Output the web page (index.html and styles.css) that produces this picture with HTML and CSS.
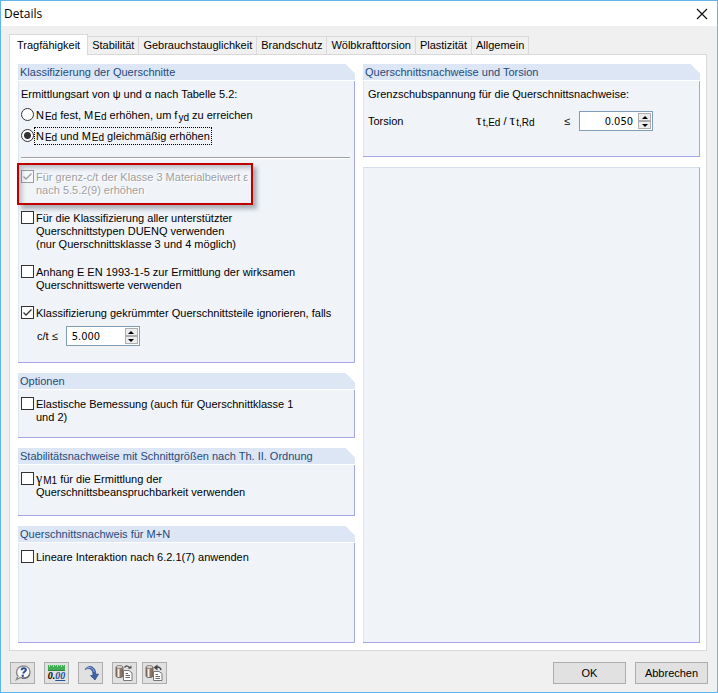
FILE: index.html
```
<!DOCTYPE html>
<html lang="de">
<head>
<meta charset="utf-8">
<title>Details</title>
<link rel="stylesheet" href="styles.css">
</head>
<body>
<div class="dialog">
  <header class="titlebar">
    <h1>Details</h1>
    <button class="close" type="button" aria-label="Schließen">
      <svg width="12" height="12" viewBox="0 0 12 12"><path d="M1 1L11 11M11 1L1 11" fill="none" stroke="#111" stroke-width="1.2"/></svg>
    </button>
  </header>

  <main class="content">
    <nav class="tabs" role="tablist">
      <button class="tab active" type="button" role="tab" aria-selected="true">Tragfähigkeit</button>
      <button class="tab" type="button" role="tab">Stabilität</button>
      <button class="tab" type="button" role="tab">Gebrauchstauglichkeit</button>
      <button class="tab" type="button" role="tab">Brandschutz</button>
      <button class="tab" type="button" role="tab">Wölbkrafttorsion</button>
      <button class="tab" type="button" role="tab">Plastizität</button>
      <button class="tab" type="button" role="tab">Allgemein</button>
    </nav>

    <div class="page">
      <div class="column">
        <section class="group">
          <h2>Klassifizierung der Querschnitte</h2>
          <div class="group-body">
            <div class="method">
              <p>Ermittlungsart von ψ und α nach Tabelle 5.2:</p>
              <div class="option">
                <input type="radio" name="method" id="m1">
                <label for="m1">N<sub>Ed</sub> fest, M<sub>Ed</sub> erhöhen, um f<sub class="low">yd</sub> zu erreichen</label>
              </div>
              <div class="option">
                <input type="radio" name="method" id="m2" checked>
                <label class="focused" for="m2">N<sub>Ed</sub> und M<sub>Ed</sub> gleichmäßig erhöhen</label>
              </div>
            </div>
            <hr>
            <div class="options">
              <div class="option highlighted">
                <input type="checkbox" id="c1" checked disabled>
                <label for="c1">Für grenz-c/t der Klasse 3 Materialbeiwert ε<br>nach 5.5.2(9) erhöhen</label>
              </div>
              <div class="option">
                <input type="checkbox" id="c2">
                <label for="c2">Für die Klassifizierung aller unterstützter<br>Querschnittstypen DUENQ verwenden<br>(nur Querschnittsklasse 3 und 4 möglich)</label>
              </div>
              <div class="option">
                <input type="checkbox" id="c3">
                <label for="c3">Anhang E EN 1993-1-5 zur Ermittlung der wirksamen<br>Querschnittswerte verwenden</label>
              </div>
              <div class="option">
                <input type="checkbox" id="c4" checked>
                <label for="c4">Klassifizierung gekrümmter Querschnittsteile ignorieren, falls</label>
              </div>
            </div>
            <div class="limit">
              <label for="ct">c/t ≤</label>
              <span class="spinner left">
                <input type="text" id="ct" value="5.000">
                <span class="steps">
                  <button type="button" aria-label="Erhöhen"><svg width="6" height="3" viewBox="0 0 6 3"><path d="M0 3L3 0L6 3Z"/></svg></button>
                  <button type="button" aria-label="Verringern"><svg width="6" height="3" viewBox="0 0 6 3"><path d="M0 0L3 3L6 0Z"/></svg></button>
                </span>
              </span>
            </div>
          </div>
        </section>

        <section class="group">
          <h2>Optionen</h2>
          <div class="group-body short">
            <div class="option">
              <input type="checkbox" id="c5">
              <label for="c5">Elastische Bemessung (auch für Querschnittklasse 1<br>und 2)</label>
            </div>
          </div>
        </section>

        <section class="group">
          <h2>Stabilitätsnachweise mit Schnittgrößen nach Th. II. Ordnung</h2>
          <div class="group-body short roomy">
            <div class="option">
              <input type="checkbox" id="c6">
              <label for="c6"><span class="greek">γ</span><sub>M1</sub> für die Ermittlung der<br>Querschnittsbeanspruchbarkeit verwenden</label>
            </div>
          </div>
        </section>

        <section class="group grow">
          <h2>Querschnittsnachweis für M+N</h2>
          <div class="group-body short">
            <div class="option">
              <input type="checkbox" id="c7">
              <label for="c7">Lineare Interaktion nach 6.2.1(7) anwenden</label>
            </div>
          </div>
        </section>
      </div>

      <div class="column">
        <section class="group">
          <h2>Querschnittsnachweise und Torsion</h2>
          <div class="group-body torsion">
            <p>Grenzschubspannung für die Querschnittsnachweise:</p>
            <div class="torsion-row">
              <label for="tau">Torsion</label>
              <span><span class="greek">τ</span><sub>t,Ed</sub> / <span class="greek">τ</span><sub>t,Rd</sub></span>
              <span>≤</span>
              <span class="spinner right">
                <input type="text" id="tau" value="0.050">
                <span class="steps">
                  <button type="button" aria-label="Erhöhen"><svg width="6" height="3" viewBox="0 0 6 3"><path d="M0 3L3 0L6 3Z"/></svg></button>
                  <button type="button" aria-label="Verringern"><svg width="6" height="3" viewBox="0 0 6 3"><path d="M0 0L3 3L6 0Z"/></svg></button>
                </span>
              </span>
            </div>
          </div>
        </section>
        <section class="group empty grow"></section>
      </div>
    </div>
  </main>

  <footer class="footer">
    <div class="tools">
      <button type="button" class="tool" aria-label="Hilfe">
        <svg width="18" height="18" viewBox="0 0 18 18">
          <path d="M9.500 2C13.500 2 16 4.500 16 8C16 11.500 13.500 14 9.500 14C8.500 14 7.500 13.800 6.500 13.400L2.500 15.500L4 12C2.700 11 2.500 9.500 2.500 8C2.500 4.500 5.500 2 9.500 2Z" fill="#fafafa" stroke="#8a8a8a" stroke-width="1.400"/>
          <path d="M15.500 10.500C14.500 13.500 12 14.800 8 14.400" fill="none" stroke="#666" stroke-width="1.200"/>
          <path d="M7.500 6.200C7.600 4.600 8.600 4.200 9.800 4.200C11.400 4.200 12.100 5 11.900 6.200C11.700 7.500 9.500 7.700 9.200 9.500" fill="none" stroke="#2c4a9c" stroke-width="1.900"/>
          <circle cx="8.800" cy="11.700" r="1.200" fill="#2c4a9c"/>
        </svg>
      </button>
      <button type="button" class="tool units" aria-label="Einheiten">
        <svg width="17" height="6" viewBox="0 0 17 6"><rect width="17" height="6" fill="#43ad54"/><path d="M1.500 0V2M3.500 0V1M5.500 0V2M7.500 0V1M9.500 0V2M11.500 0V1M13.500 0V2M15.500 0V1" stroke="#a7dfae"/><path d="M0 5.500H17" stroke="#2f8440"/></svg>
        <span>0.<u>00</u></span>
      </button>
      <button type="button" class="tool" aria-label="Übernehmen">
        <svg width="18" height="18" viewBox="0 0 18 18">
          <path d="M3 5.500C5 2.500 8.500 1.500 11 3.500C13.300 5.300 13.800 8 13.800 10.500L16.500 10L13 16L8.500 11.700L11 11.200C11 8.500 10.500 6.500 8.800 5.300C7 4 5 4.500 3 5.500Z" fill="#3f62a8" stroke="#27447f" stroke-width=".7"/>
          <path d="M4.500 4.500C8 2.300 11.500 4 12.200 8" fill="none" stroke="#9db5dc" stroke-width="1"/>
        </svg>
      </button>
      <button type="button" class="tool" aria-label="Laden">
        <svg width="19" height="18" viewBox="0 0 19 18">
          <path d="M1 3V12C1 14 8 14 8 12V3Z" fill="#8a7565" stroke="#5f534b" stroke-width=".8"/>
          <path d="M3.500 3.500V13" stroke="#f4eee8" stroke-width="2"/>
          <ellipse cx="4.500" cy="3" rx="3.500" ry="1.500" fill="#ddd5cd" stroke="#6d625a" stroke-width=".7"/>
          <path d="M9.500 3.500C11 1.500 13.500 1.500 15 4.500" fill="none" stroke="#555" stroke-width="1.500"/>
          <path d="M12.500 4.500H16.500V1.500Z" fill="#555"/>
          <path d="M8.500 6.500H14L17 9V16.500H8.500Z" fill="#fff" stroke="#777"/>
          <path d="M10.500 9.500H13M10.500 11.500H15M10.500 13.500H15" stroke="#666"/>
        </svg>
      </button>
      <button type="button" class="tool" aria-label="Speichern">
        <svg width="19" height="18" viewBox="0 0 19 18">
          <path d="M1 3V12C1 14 8 14 8 12V3Z" fill="#8a7565" stroke="#5f534b" stroke-width=".8"/>
          <path d="M3.500 3.500V13" stroke="#f4eee8" stroke-width="2"/>
          <ellipse cx="4.500" cy="3" rx="3.500" ry="1.500" fill="#ddd5cd" stroke="#6d625a" stroke-width=".7"/>
          <path d="M11 3.500C13.500 2.500 15.500 3.500 16 6" fill="none" stroke="#444" stroke-width="1.500"/>
          <path d="M12.500 .5V6.500L8.500 3.500Z" fill="#444"/>
          <path d="M8.500 7.500H14L17 9.500V16.500H8.500Z" fill="#fff" stroke="#777"/>
          <path d="M10.500 10.500H13M10.500 12.500H15M10.500 14.500H15" stroke="#666"/>
        </svg>
      </button>
    </div>
    <div class="actions">
      <button type="button" class="action">OK</button>
      <button type="button" class="action">Abbrechen</button>
    </div>
  </footer>
</div>
</body>
</html>
```
FILE: styles.css
```
*, *::after { box-sizing: border-box; }

body {
  margin: 0;
  font: 11px/13px "Liberation Sans", Arial, sans-serif;
  color: #000;
}

h1, h2, p { margin: 0; font-size: 11px; font-weight: normal; }
button, input { font: inherit; color: inherit; padding: 0; }
svg { display: block; }

.dialog {
  display: flex;
  flex-direction: column;
  min-height: 100vh;
  border: 1px solid #62b5eb;
  background: #f0f0f0;
}

.titlebar {
  display: flex;
  justify-content: space-between;
  align-items: center;
  height: 25px;
  padding: 0 9px 0 3px;
  background: #fff;
}
.titlebar h1 { font: 12px/16px "Open Sans", sans-serif; }
.close { border: 0; background: none; }

.content {
  flex: 1;
  display: flex;
  flex-direction: column;
  padding: 8px 8px 0;
}

.tabs { display: flex; align-items: flex-end; height: 20px; }
.tab {
  height: 18px;
  padding: 0 4px;
  border: solid #d9d9d9;
  border-width: 1px 1px 0 0;
  background: #f0f0f0;
  white-space: nowrap;
}
.tab.active {
  height: 21px;
  margin-bottom: -1px;
  padding: 0 7px;
  border-left-width: 1px;
  background: #fff;
  z-index: 1;
}

.page {
  flex: 1;
  display: grid;
  grid-template-columns: 1fr 1fr;
  gap: 8px;
  padding: 9px 6px 7px 8px;
  margin-right: 2px;
  border: 1px solid #d9d9d9;
  background: #fff;
}
.column { display: flex; flex-direction: column; gap: 10px; }

.group {
  display: flex;
  flex-direction: column;
  border: solid #a6a6ea;
  border-width: 0 1px 1px 0;
  background: linear-gradient(#dce6f4, #dce6f4) left / 1px 100% no-repeat #f0f4f9;
}
.group.grow { flex: 1; }
.group.empty { border-top: 1px solid #d3dfec; }
.group h2 {
  height: 17px;
  margin-right: -1px;
  padding: 0 2px;
  line-height: 16px;
  color: #1f4a7c;
  border-bottom: 1px solid #fff;
  background: linear-gradient(225deg, #fff 7px, #dce6f4 7px);
}
.group-body { padding: 7px 4px 16px 3px; }
.group-body.short { padding: 7px 3px 13px; }
.group-body.roomy { padding-bottom: 16px; }

.method { display: flex; flex-direction: column; gap: 7px; }
hr {
  height: 2px;
  margin: 14px 0 11px;
  border: 0;
  border-top: 1px solid #a0a0a0;
  border-bottom: 1px solid #fff;
}
.options { display: flex; flex-direction: column; gap: 14px; }

.option { display: flex; align-items: flex-start; gap: 2px; position: relative; }
.option label { padding-top: 1px; }
.option input {
  appearance: none;
  flex: none;
  width: 13px;
  height: 13px;
  margin: 0;
  border: 1px solid #333;
  background: #fff;
}
.option input[type="radio"] { border-radius: 50%; }
.option input[type="radio"]:checked { background: radial-gradient(circle, #333 3px, #fff 4px); }
.option input[type="checkbox"]:checked {
  background: #fff url("data:image/svg+xml,%3Csvg xmlns='http://www.w3.org/2000/svg' viewBox='0 0 11 11'%3E%3Cpath d='M1.500 5.500L4 8L9.500 2.500' fill='none' stroke='%23333' stroke-width='1.300'/%3E%3C/svg%3E");
}
.option input:disabled { opacity: .45; }
.option input:disabled + label { color: #a0a0a0; text-shadow: 1px 1px 0 #fff; }
.focused { outline: 1px dotted #000; outline-offset: 1px; }

sub { font-size: 10px; line-height: 0; vertical-align: -1px; margin-left: 1px; }
sub.low { vertical-align: -2px; }
.greek { font-family: "Liberation Serif", serif; font-size: 14px; line-height: 0; }

/* Marker frame drawn around the option */
.highlighted::after {
  content: "";
  position: absolute;
  top: -7px;
  left: -4px;
  width: 236px;
  height: 42px;
  border: 2px solid #c00000;
  box-shadow: 4px 4px 4px rgba(90, 95, 105, .45), inset 3px 3px 4px rgba(90, 95, 105, .35);
}

.limit { display: flex; align-items: center; gap: 8px; margin: 6px 0 0 16px; }
.spinner {
  display: flex;
  width: 74px;
  height: 20px;
  padding: 1px;
  border: 1px solid #7f9db9;
  background: #fff;
}
.spinner input { flex: 1; min-width: 0; border: 0; background: none; font: 11px "DejaVu Sans Condensed", sans-serif; }
.spinner.left input { padding-left: 4px; }
.spinner.right input { padding-right: 5px; text-align: right; }
.steps { display: flex; flex-direction: column; width: 13px; }
.steps button {
  flex: 1;
  display: flex;
  align-items: center;
  justify-content: center;
  border: 1px solid #adadad;
  background: #ececec;
}

.group-body.torsion { padding: 7px 5px 25px; }
.torsion-row {
  display: grid;
  grid-template-columns: 108px 88px 15px auto;
  justify-content: start;
  align-items: center;
  margin-top: 10px;
}

.footer {
  display: flex;
  justify-content: space-between;
  padding: 11px 9px 8px;
}
.tools { display: flex; gap: 9px; }
.tool {
  display: flex;
  flex-direction: column;
  align-items: center;
  justify-content: center;
  width: 25px;
  height: 22px;
  border: 1px solid #adadad;
  background: #e1e1e1;
}
.tool + .tool:last-child { margin-left: -4px; }
.units span { font: italic bold 10px/10px "Liberation Serif", serif; }
.units u { color: #24509a; }

.actions { display: flex; gap: 9px; }
.action {
  width: 73px;
  height: 22px;
  border: 1px solid #adadad;
  background: #e1e1e1;
}
```
